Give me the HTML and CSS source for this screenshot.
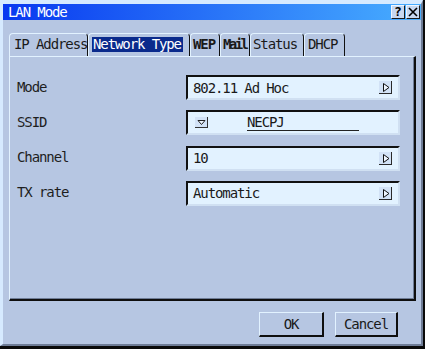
FILE: index.html
```html
<!DOCTYPE html>
<html>
<head>
<meta charset="utf-8">
<link rel="stylesheet" href="styles.css">
</head>
<body>
<div class="window">
  <div class="frame">
    <div class="titlebar">
      <span class="title">LAN Mode</span>
      <div class="tbtns">
        <span class="tbtn help">?</span>
        <span class="tbtn close"><svg width="12" height="12" viewBox="0 0 12 12"><path d="M2 2L10 10M10 2L2 10" stroke="#000" stroke-width="1.6"/></svg></span>
      </div>
    </div>
    <div class="tabs">
      <div class="tab t-ip"><span>IP Address</span></div>
      <div class="tab t-net"><span class="sel">Network Type</span></div>
      <div class="tab t-wep"><span class="bold">WEP</span></div>
      <div class="tab t-mail"><span class="bold squeeze">Mail</span></div>
      <div class="tab t-status"><span>Status</span></div>
      <div class="tab t-dhcp"><span>DHCP</span></div>
    </div>
    <div class="panel">
      <div class="form">
        <div class="label">Mode</div>
        <div class="field">
          <span class="val">802.11 Ad Hoc</span>
          <span class="arrow"><svg width="13" height="13" viewBox="0 0 13 13"><rect width="13" height="13" fill="#d2e2f6"/><path d="M0 12.5H13M12.5 0V13" stroke="#2a2a2a"/><path d="M4.5 2.5V10.5L10 6.5Z" fill="#eef6ff" stroke="#111"/></svg></span>
        </div>
        <div class="label">SSID</div>
        <div class="field ssid">
          <span class="drop"><svg width="13" height="11" viewBox="0 0 13 11"><rect width="13" height="11" fill="#d2e2f6"/><path d="M0 10.5H13M12.5 0V11" stroke="#333"/><path d="M3 3.5H10L6.5 7.5Z" fill="#eef6ff" stroke="#222"/></svg></span>
          <span class="ssid-text">NECPJ</span>
        </div>
        <div class="label">Channel</div>
        <div class="field">
          <span class="val">10</span>
          <span class="arrow"><svg width="13" height="13" viewBox="0 0 13 13"><rect width="13" height="13" fill="#d2e2f6"/><path d="M0 12.5H13M12.5 0V13" stroke="#2a2a2a"/><path d="M4.5 2.5V10.5L10 6.5Z" fill="#eef6ff" stroke="#111"/></svg></span>
        </div>
        <div class="label">TX rate</div>
        <div class="field">
          <span class="val">Automatic</span>
          <span class="arrow"><svg width="13" height="13" viewBox="0 0 13 13"><rect width="13" height="13" fill="#d2e2f6"/><path d="M0 12.5H13M12.5 0V13" stroke="#2a2a2a"/><path d="M4.5 2.5V10.5L10 6.5Z" fill="#eef6ff" stroke="#111"/></svg></span>
        </div>
      </div>
    </div>
    <div class="footer">
      <button class="btn ok">OK</button>
      <button class="btn cancel">Cancel</button>
    </div>
  </div>
</div>
</body>
</html>
```

FILE: styles.css
```css
body {
  margin: 0;
  background: #b6c6e2;
}

.window {
  width: 425px;
  height: 349px;
  box-sizing: border-box;
  border-right: 2px solid #0a0a0a;
  border-bottom: 3px solid #0a0a0a;
  background: #b6c6e2;
  font-family: "DejaVu Sans Mono", monospace;
  font-size: 14px;
  letter-spacing: -1.1px;
  color: #1a1a1a;
}

.frame {
  height: 100%;
  box-sizing: border-box;
  border-left: 3px solid #d6eaff;
  border-top: 4px solid #d6eaff;
  border-right: 2px solid #6e7c96;
  border-bottom: 2px solid #6e7c96;
  display: flex;
  flex-direction: column;
}

.titlebar {
  height: 16px;
  flex: none;
  background: linear-gradient(to right, #0838f0, #48aeff);
  display: flex;
  align-items: center;
  justify-content: space-between;
  padding: 0 1px 0 5px;
  color: #fff;
}

.title {
  line-height: 16px;
}

.tbtns {
  display: flex;
  gap: 1px;
}

.tbtn {
  width: 14px;
  height: 14px;
  box-sizing: border-box;
  background: #c8d8f0;
  border: 1px solid;
  border-color: #eef6ff #1a1a1a #1a1a1a #eef6ff;
  display: flex;
  align-items: center;
  justify-content: center;
  color: #000;
  font-weight: bold;
  font-size: 13px;
  line-height: 12px;
  letter-spacing: 0;
}

.tabs {
  display: flex;
  flex: none;
  margin: 13px 0 0 6px;
  height: 23px;
}

.tab {
  box-sizing: border-box;
  height: 23px;
  border-top: 1px solid #e2f2ff;
  border-left: 1px solid #e2f2ff;
  border-right: 1px solid #111;
  border-radius: 4px 4px 0 0;
  padding: 2px 0 0 4px;
  line-height: 16px;
  white-space: nowrap;
  overflow: hidden;
}

.t-ip { width: 79px; }
.t-net { width: 102px; padding-left: 3px; }
.t-wep { width: 30px; padding-left: 2px; }
.t-mail { width: 30px; padding-left: 2px; }
.t-status { width: 54px; padding-left: 2px; }
.t-dhcp { width: 41px; padding-left: 3px; }

.sel {
  display: inline-block;
  background: #0a2a8c;
  color: #fff;
  padding: 0 2px 0 1px;
  line-height: 15px;
}

.bold {
  font-weight: bold;
}

.squeeze {
  letter-spacing: -2.6px;
}

.panel {
  flex: none;
  margin-left: 6px;
  width: 407px;
  height: 245px;
  box-sizing: border-box;
  border-top: 1px solid #e2f2ff;
  border-left: 1px solid #e2f2ff;
  border-right: 2px solid #0e0e0e;
  border-bottom: 2px solid #0e0e0e;
  box-shadow: inset -1px -1px 0 #6e7c96;
  padding: 18px 0 0 7px;
}

.form {
  display: grid;
  grid-template-columns: 169px 214px;
  grid-auto-rows: 25px;
  row-gap: 10.33px;
  align-items: center;
}

.label {
  color: #1e1e1e;
  padding-bottom: 2px;
}

.field {
  box-sizing: border-box;
  height: 25px;
  border: 2px solid;
  border-color: #111 #d0e0f2 #d0e0f2 #111;
  background: #e2f2ff;
  display: flex;
  align-items: center;
  padding: 0 6px 0 5px;
}

.val {
  flex: 1;
}

.arrow,
.drop {
  display: flex;
}

.ssid {
  padding-left: 7px;
}

.ssid-text {
  display: inline-block;
  width: 112px;
  margin-left: 39px;
  border-bottom: 1px solid #222;
  line-height: 15px;
}

.footer {
  display: flex;
  justify-content: flex-end;
  gap: 11px;
  padding: 11px 23px 0 0;
}

.btn {
  height: 25px;
  box-sizing: border-box;
  background: #b6c6e2;
  border-style: solid;
  border-width: 1px 2px 2px 1px;
  border-color: #e2f2ff #0e0e0e #0e0e0e #e2f2ff;
  font-family: "DejaVu Sans Mono", monospace;
  font-size: 14px;
  letter-spacing: -1.1px;
  color: #1a1a1a;
  padding: 0;
}

.ok { width: 65px; }
.cancel { width: 63px; }
```
